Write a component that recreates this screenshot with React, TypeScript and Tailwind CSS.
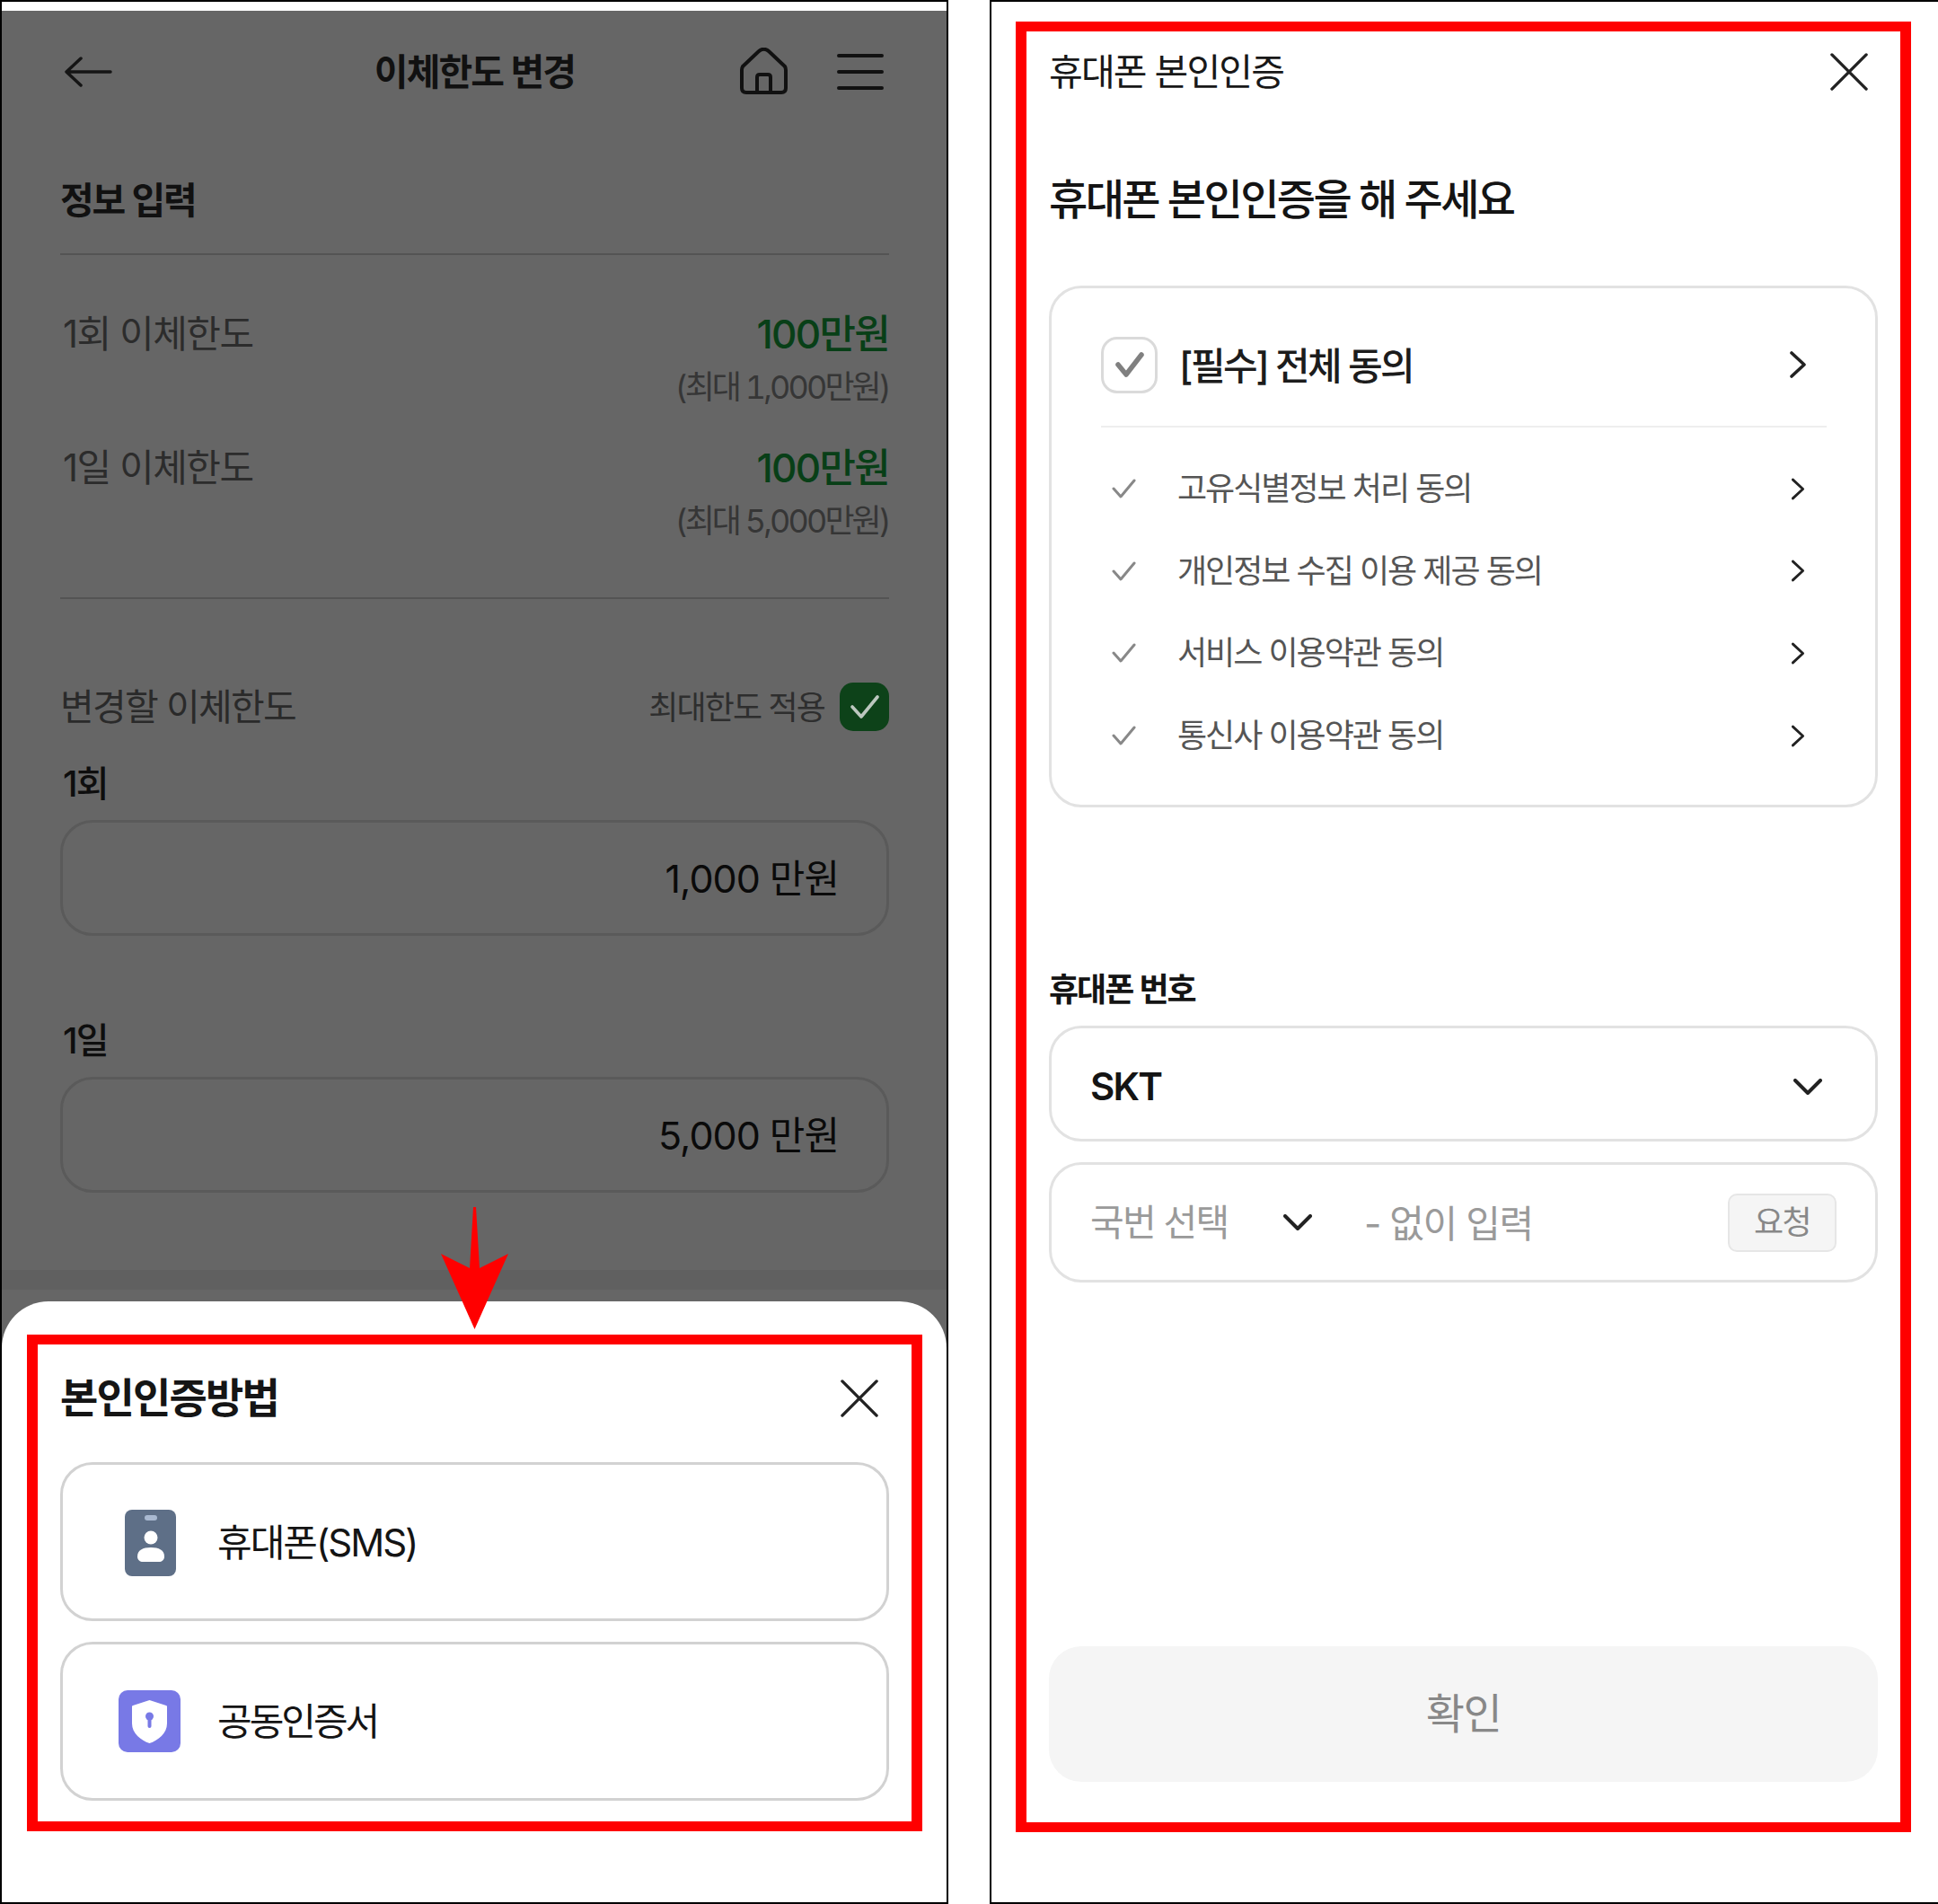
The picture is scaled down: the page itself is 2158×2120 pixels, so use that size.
const FONT = "font-[family-name:Inter,'Noto_Sans_CJK_KR',sans-serif]";

const AGREEMENTS = [
  "고유식별정보 처리 동의",
  "개인정보 수집 이용 제공 동의",
  "서비스 이용약관 동의",
  "통신사 이용약관 동의",
];

function CloseIcon({ className }: { className: string }) {
  return (
    <svg viewBox="0 0 44 44" className={className} fill="none" stroke="#222222" strokeWidth="3.5" strokeLinecap="round">
      <path d="M2 2 42 42M42 2 2 42" />
    </svg>
  );
}

function Chevron({ small }: { small?: boolean }) {
  return (
    <svg
      viewBox="0 0 20 30"
      className={small ? "h-[25px] w-[16px]" : "h-[30px] w-[20px]"}
      fill="none"
      stroke="#222222"
      strokeWidth="3.600"
      strokeLinecap="round"
      strokeLinejoin="round"
    >
      <path d="M3 2 17 15 3 28" />
    </svg>
  );
}

function ChevronDown({ className }: { className: string }) {
  return (
    <svg viewBox="0 0 32 18" className={className} fill="none" stroke="#222222" strokeWidth="4" strokeLinecap="round" strokeLinejoin="round">
      <path d="M2 2 16 16 30 2" />
    </svg>
  );
}

function LimitRow({ label, value, max }: { label: string; value: string; max: string }) {
  return (
    <>
      <div className="flex h-[50px] items-center justify-between pl-[3px]">
        <span className="text-[42px] tracking-[-1.5px] text-[#2c2c2c]">{label}</span>
        <span className="pt-[1px] text-[44px] font-medium tracking-[-1.7px] text-[#083f17]">{value}</span>
      </div>
      <div className="mt-[15px] flex h-[40px] items-center justify-end text-[36px] tracking-[-2.900px] text-[#363636] tabular-nums">{max}</div>
    </>
  );
}

function AmountField({ label, value, className }: { label: string; value: string; className: string }) {
  return (
    <>
      <div className={`flex h-[40px] items-center pl-[3px] text-[40px] font-medium tracking-[-1.800px] text-[#0e0e0e] ${className}`}>{label}</div>
      <div className="mt-[20px] flex h-[129px] items-center justify-end rounded-[36px] border-[3px] border-[#5a5a5a] pr-[53px] text-[43px] tracking-[-1px] text-[#0a0a0a]">
        <span className="pt-[2px]">{value}</span>
      </div>
    </>
  );
}

function MethodCard({ label, icon, className, labelClass }: { label: string; icon: React.ReactNode; className: string; labelClass: string }) {
  return (
    <div className={`flex items-center rounded-[36px] border-[3px] border-[#d2d2d2] ${className}`}>
      <div className="flex w-[172px] justify-center pl-[20px]">{icon}</div>
      <span className={`text-[42px] text-[#141414] ${labelClass}`}>{label}</span>
    </div>
  );
}

function LeftPhone() {
  return (
    <div className="relative flex h-[2120px] w-[1056px] flex-col border-2 border-black bg-[#666666]">
      <div className="h-[10px] bg-white" />
      <div className="pl-[65px] pr-[64px]">
        <div className="mt-[32px] grid h-[72px] grid-cols-[1fr_auto_1fr] items-center">
          <svg viewBox="0 0 53 34" className="ml-[5px] h-[34px] w-[53px]" fill="none" stroke="#151515" strokeWidth="3.5" strokeLinecap="round" strokeLinejoin="round">
            <path d="M51 17H3M18 2 2 17 18 32" />
          </svg>
          <div className="pt-[1px] text-[41px] font-semibold tracking-[-1.900px] text-[#111111]">이체한도 변경</div>
          <div className="flex items-center justify-end gap-[55px] pr-[6px]">
            <svg viewBox="0 0 53 52" className="-mt-[2px] h-[52px] w-[53px]" fill="none" stroke="#111111" strokeWidth="4" strokeLinejoin="round">
              <path d="M3 21 21 4c3-3 8-3 11 0l18 17q1 2 1 4v20q0 5-5 5H7q-5 0-5-5V25q0-2 1-4Z" />
              <path d="M19 50V33q0-3 3-3h9q3 0 3 3v17" />
            </svg>
            <svg viewBox="0 0 52 42" className="h-[42px] w-[52px]" fill="none" stroke="#111111" strokeWidth="4" strokeLinecap="round">
              <path d="M2 3H50M2 21H50M2 39H50" />
            </svg>
          </div>
        </div>

        <div className="mt-[77px] flex h-[60px] items-center pt-[2px] text-[41px] font-semibold tracking-[-2.100px] text-[#111111]">정보 입력</div>
        <div className="mt-[29px] h-[2px] bg-[#545454]" />

        <div className="mt-[62px]">
          <LimitRow label="1회 이체한도" value="100만원" max="(최대 1,000만원)" />
        </div>
        <div className="mt-[44px]">
          <LimitRow label="1일 이체한도" value="100만원" max="(최대 5,000만원)" />
        </div>
        <div className="mt-[65px] h-[2px] bg-[#545454]" />

        <div className="mt-[93px] flex h-[54px] items-center justify-between">
          <span className="pt-[2px] text-[41px] tracking-[-1.7px] text-[#2a2a2a]">변경할 이체한도</span>
          <div className="flex items-center gap-[17px]">
            <span className="pt-[2px] text-[36px] tracking-[-1.860px] text-[#2e2e2e]">최대한도 적용</span>
            <div className="flex h-[54px] w-[55px] items-center justify-center rounded-[15px] bg-[#0d4219]">
              <svg viewBox="0 0 32 26" className="h-[26px] w-[32px]" fill="none" stroke="#bcc7bf" strokeWidth="3.600" strokeLinecap="round" strokeLinejoin="round">
                <path d="M2 13 12 24 30 2" />
              </svg>
            </div>
          </div>
        </div>

        <AmountField label="1회" value="1,000 만원" className="mt-[39px]" />
        <AmountField label="1일" value="5,000 만원" className="mt-[97px]" />
      </div>

      <div className="mt-[86px] h-[22px] bg-[#606060]" />

      <div className="mt-[13px] flex-1 rounded-t-[52px] bg-white pl-[65px] pr-[64px] pt-[77px]">
        <div className="flex h-[60px] items-center justify-between">
          <span className="text-[46px] font-semibold tracking-[-1.800px] text-[#151515]">본인인증방법</span>
          <CloseIcon className="mr-[11px] mt-[2px] h-[42px] w-[44px]" />
        </div>
        <MethodCard
          label="휴대폰(SMS)"
          labelClass="pt-[2px] tracking-[-2px]"
          className="mt-[42px] h-[177px]"
          icon={
            <svg viewBox="0 0 57 74" className="ml-[3px] mt-[2px] h-[74px] w-[57px]">
              <rect width="57" height="74" rx="8" fill="#5e6f87" />
              <rect x="22" y="6" width="14" height="6" rx="3" fill="#a9b9d1" />
              <circle cx="29" cy="31" r="7.500" fill="#ffffff" />
              <path d="M14 52c0-7 6-10 15-10s15 3 15 10c0 4-3 6-6 6H20c-3 0-6-2-6-6Z" fill="#ffffff" />
            </svg>
          }
        />
        <MethodCard
          label="공동인증서"
          labelClass="tracking-[-3px]"
          className="mt-[23px] h-[177px]"
          icon={
            <svg viewBox="0 0 69 69" className="h-[69px] w-[69px]">
              <rect width="69" height="69" rx="10" fill="#7879e6" />
              <path d="M34.500 11 53 17c1 0 1 1 1 2v18c0 11-10 19-19.500 22C25 56 15 48 15 37V19c0-1 0-2 1-2Z" fill="#ffffff" />
              <circle cx="34.500" cy="29" r="4.500" fill="#7879e6" />
              <rect x="32.500" y="30" width="4" height="12" rx="2" fill="#7879e6" />
            </svg>
          }
        />
      </div>

      {/* 주석: 빨간 표시 */}
      <div className="absolute left-[28px] top-[1484px] h-[553px] w-[997px] border-x-[12px] border-y-[11px] border-[#ff0000]" />
      <svg viewBox="0 0 75 136" className="absolute left-[489px] top-[1342px] h-[136px] w-[75px]">
        <path d="M36 0H39L43 68 75 52 37.500 136 0 52 32 68Z" fill="#ff0000" />
      </svg>
    </div>
  );
}

function RightPhone() {
  return (
    <div className="relative flex h-[2120px] w-[1056px] flex-col border-y-2 border-l-2 border-black bg-white pl-[64px] pr-[67px] pt-[48px]">
      <div className="flex h-[60px] items-center justify-between">
        <span className="pt-[1px] text-[41px] tracking-[-1.800px] text-[#181818]">휴대폰 본인인증</span>
        <CloseIcon className="mr-[11px] h-[42px] w-[42px]" />
      </div>
      <div className="mt-[77px] flex h-[70px] items-center text-[47px] font-medium tracking-[-2.600px] text-[#141414]">휴대폰 본인인증을 해 주세요</div>

      <div className="mt-[61px] h-[581px] rounded-[36px] border-[3px] border-[#e2e2e2] pl-[55px] pr-[54px] pt-[53px]">
        <div className="flex h-[64px] items-center pr-[22px]">
          <div className="flex h-[63px] w-[63px] items-center justify-center rounded-[18px] border-[3px] border-[#dadada]">
            <svg viewBox="0 0 32 28" className="h-[28px] w-[32px]" fill="none" stroke="#808080" strokeWidth="5.500" strokeLinecap="round" strokeLinejoin="round">
              <path d="M3 14 12 25 29 3" />
            </svg>
          </div>
          <span className="ml-[24px] flex-1 pt-[2px] text-[42px] font-medium tracking-[-2.500px] text-[#1c1c1c]">[필수] 전체 동의</span>
          <Chevron />
        </div>
        <div className="mt-[36px] h-[2px] bg-[#eeeeee]" />
        <div className="mt-[38px] flex flex-col gap-[31.700px]">
          {AGREEMENTS.map((text) => (
            <div key={text} className="flex h-[60px] items-center pl-[12px] pr-[24px]">
              <svg viewBox="0 0 27 22" className="h-[22px] w-[27px]" fill="none" stroke="#888888" strokeWidth="3" strokeLinecap="round" strokeLinejoin="round">
                <path d="M2 11 10 20 25 2" />
              </svg>
              <span className="ml-[46px] flex-1 text-[36px] tracking-[-2px] text-[#555555]">{text}</span>
              <Chevron small />
            </div>
          ))}
        </div>
      </div>

      <div className="mt-[183px] flex h-[40px] items-center text-[36px] font-semibold tracking-[-2px] text-[#141414]">휴대폰 번호</div>
      <div className="mt-[20px] flex h-[129px] items-center justify-between rounded-[36px] border-[3px] border-[#e2e2e2] pl-[43px] pr-[59px]">
        <span className="pt-[6px] text-[42px] font-semibold tracking-[-1.800px] text-[#141414]">SKT</span>
        <ChevronDown className="mt-[6px] h-[18px] w-[32px]" />
      </div>
      <div className="mt-[23px] flex h-[134px] items-center rounded-[36px] border-[3px] border-[#e2e2e2] pl-[43px] pr-[43px]">
        <span className="w-[215px] pt-[2px] text-[41px] tracking-[-1.800px] text-[#9a9a9a]">국번 선택</span>
        <ChevronDown className="h-[18px] w-[32px]" />
        <span className="ml-[58px] flex-1 pt-[2px] text-[42px] tracking-[-1.400px] text-[#9a9a9a]">- 없이 입력</span>
        <div className="flex h-[65px] w-[121px] items-center justify-center rounded-[10px] border-2 border-[#e6e6e6] bg-[#f5f5f5] text-[36px] tracking-[-1.500px] text-[#888888]">요청</div>
      </div>

      <div className="mt-[405px] flex h-[151px] items-center justify-center rounded-[36px] bg-[#f5f5f5] text-[47px] tracking-[-1.500px] text-[#888888]">확인</div>

      {/* 주석: 빨간 표시 */}
      <div className="absolute left-[27px] top-[22px] h-[2016px] w-[997px] border-x-[12px] border-y-[11px] border-[#ff0000]" />
    </div>
  );
}

export default function App() {
  return (
    <div className={`flex h-[2120px] w-[2158px] justify-between bg-white ${FONT}`}>
      <LeftPhone />
      <RightPhone />
    </div>
  );
}
